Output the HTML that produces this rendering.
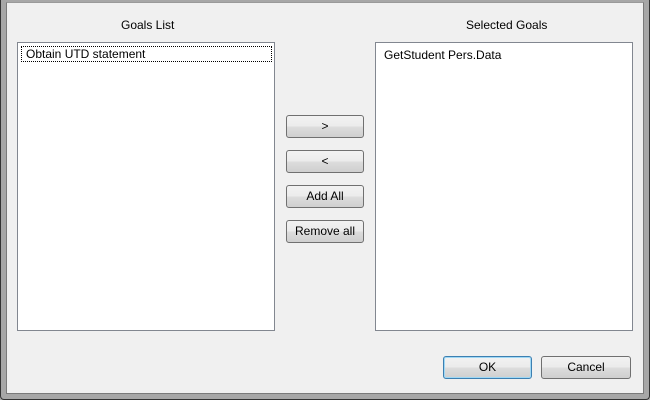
<!DOCTYPE html>
<html><head><style>
*{margin:0;padding:0;box-sizing:border-box}
body{width:650px;height:400px;overflow:hidden;background:#a9a9a9;font-family:"Liberation Sans",sans-serif;font-size:12px;color:#000;position:relative}
.frame{position:absolute;left:0;top:0;width:650px;height:400px;border:1px solid #333;border-top:none;border-radius:0 0 4px 4px;background:#a7a7a7}
.content{position:absolute;left:6px;top:2px;width:638px;height:392px;background:#f0f0f0;border:1px solid #7a7a7a;border-top:1px solid #9a9a9a}
.lbl{position:absolute;top:18px;font-size:12px}
.list{position:absolute;top:42px;width:258px;height:289px;background:#fff;border:1px solid #828790}
.item{position:absolute;left:3px;top:3px;right:2px;height:16px;border:1px dotted #000;padding-left:4px;line-height:14px}
.btn{position:absolute;height:23px;border:1px solid #707070;border-radius:3px;background:linear-gradient(#f2f2f2 0,#ebebeb 50%,#dddddd 51%,#cfcfcf 100%);text-align:center;line-height:21px;font-size:12px}
</style></head><body>
<div class="frame"></div>
<div class="content"></div>
<div class="lbl" style="left:121px">Goals List</div>
<div class="lbl" style="left:466px">Selected Goals</div>
<div class="list" style="left:17px"><div class="item">Obtain UTD statement</div></div>
<div class="list" style="left:375px"><div style="position:absolute;left:8px;top:5px">GetStudent Pers.Data</div></div>
<div class="btn" style="left:286px;top:115px;width:78px">&gt;</div>
<div class="btn" style="left:286px;top:150px;width:78px">&lt;</div>
<div class="btn" style="left:286px;top:185px;width:78px">Add All</div>
<div class="btn" style="left:286px;top:220px;width:78px">Remove all</div>
<div class="btn" style="left:443px;top:356px;width:89px;border-color:#3c7fb1;box-shadow:inset 0 0 0 1px #9fd8f5">OK</div>
<div class="btn" style="left:541px;top:356px;width:90px">Cancel</div>
</body></html>
